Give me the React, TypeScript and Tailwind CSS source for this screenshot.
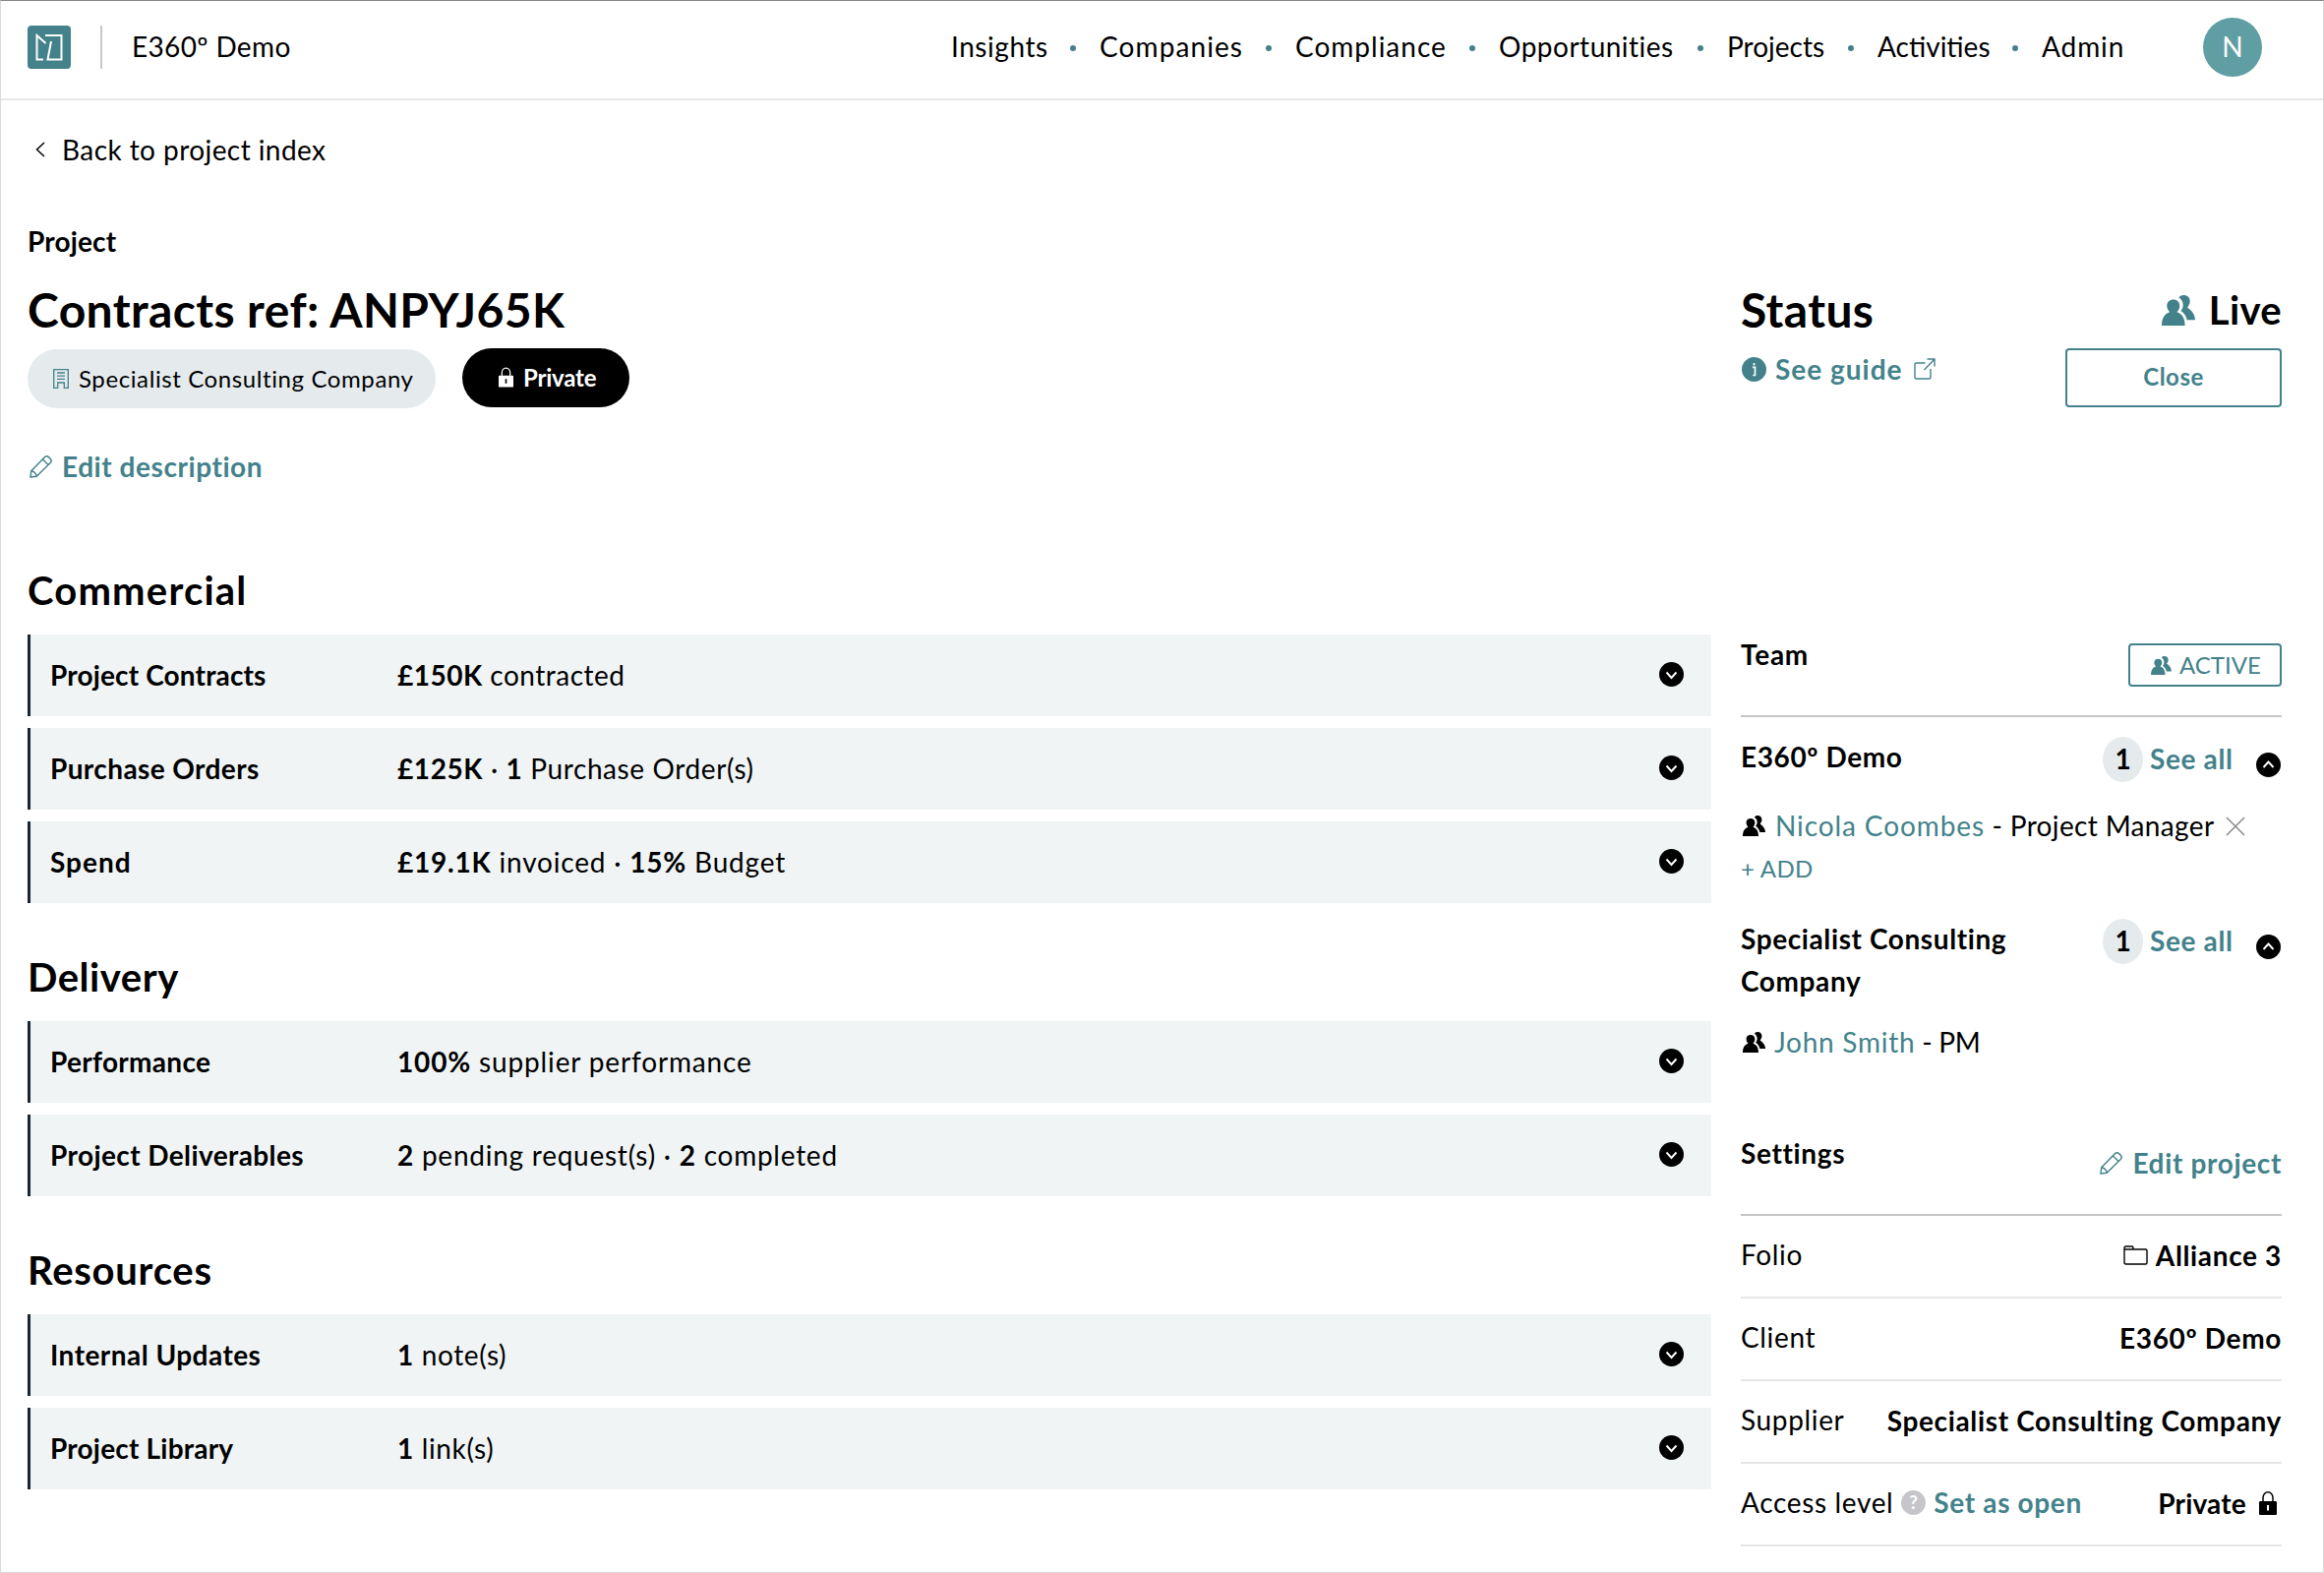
import type { ReactNode } from 'react';

const NAV = [
  { label: 'Insights', cls: 'w-[97px] tracking-[0.55px]' },
  { label: 'Companies', cls: 'w-[145px] tracking-[1.1px]' },
  { label: 'Compliance', cls: 'w-[153px] tracking-[1px]' },
  { label: 'Opportunities', cls: 'w-[178px] tracking-[0.5px]' },
  { label: 'Projects', cls: 'w-[99px]' },
  { label: 'Activities', cls: 'w-[113px]' },
  { label: 'Admin', cls: 'w-[85px] tracking-[0.9px]' },
];

const SECTIONS = [
  {
    title: 'Commercial',
    cls: 'tracking-[1.2px]',
    rows: [
      { label: 'Project Contracts', lcls: 'tracking-[0.15px]', value: <><b>£150K</b> contracted</>, cls: 'tracking-[0.5px]' },
      { label: 'Purchase Orders', lcls: 'tracking-[0.4px]', value: <><b>£125K</b> · <b>1</b> Purchase Order(s)</>, cls: 'tracking-[0.6px]' },
      { label: 'Spend', lcls: 'tracking-[1px]', value: <><b>£19.1K</b> invoiced · <b>15%</b> Budget</>, cls: 'tracking-[0.8px]' },
    ],
  },
  {
    title: 'Delivery',
    cls: 'tracking-[0.55px]',
    rows: [
      { label: 'Performance', lcls: 'tracking-[0.3px]', value: <><b>100%</b> supplier performance</>, cls: 'tracking-[0.85px]' },
      { label: 'Project Deliverables', lcls: 'tracking-[0.4px]', value: <><b>2</b> pending request(s) · <b>2</b> completed</>, cls: 'tracking-[0.75px]' },
    ],
  },
  {
    title: 'Resources',
    cls: 'tracking-[0.75px]',
    rows: [
      { label: 'Internal Updates', lcls: 'tracking-[0.47px]', value: <><b>1</b> note(s)</>, cls: 'tracking-[0.65px]' },
      { label: 'Project Library', lcls: 'tracking-[0.2px]', value: <><b>1</b> link(s)</>, cls: 'tracking-[0.65px]' },
    ],
  },
];

function People({ className }: { className?: string }) {
  return (
    <svg viewBox="0 0 34 31" fill="currentColor" className={className}>
      <path d="M0 31C0 23 3 19 8.200 17.200 6.300 15.700 5.300 13 5.300 10.800 5.300 6.800 8 4.500 11.800 4.500s6.500 2.300 6.500 6.300c0 2.200-1 4.900-2.900 6.400C20.600 19 23.600 23 23.600 31z" />
      <path d="M17.500 2.400C18.600.8 20.300 0 22.300 0c3.800 0 6.400 2.300 6.400 6.200 0 2.200-1.200 4.700-2.700 6.200 4.500 3 8 7.500 8 12.800h-8.300c-.9-3.800-2.800-6.900-6.300-9.200 1.700-1.800 2.300-3.700 2.300-5.900 0-3.200-1.500-6.200-4.200-7.700z" />
    </svg>
  );
}

function Lock({ className }: { className?: string }) {
  return (
    <svg viewBox="0 0 18 24" className={className}>
      <path d="M4 11V6.300a5 5.500 0 0 1 10 0V11" fill="none" stroke="currentColor" strokeWidth="1.500" />
      <path fillRule="evenodd" fill="currentColor" d="M1 10h16a1 1 0 0 1 1 1v12a1 1 0 0 1-1 1H1a1 1 0 0 1-1-1V11a1 1 0 0 1 1-1zM8 14v5.500h2V14z" />
    </svg>
  );
}

function Pencil({ className }: { className?: string }) {
  return (
    <svg viewBox="0 0 24 24" fill="none" stroke="currentColor" strokeWidth="1.500" strokeLinejoin="round" className={className}>
      <path d="M1 23l.8-6.500L15.800 2.200c1.500-1.500 3.300-1.500 4.500-.5l2 2c1 1.200 1 3-.5 4.500L7.500 22.200zM1.800 16.500c2.700 0 5.700 3 5.700 5.700M14 4.200l5.800 5.800" />
    </svg>
  );
}

function Chevron({ up }: { up?: boolean }) {
  return (
    <svg viewBox="0 0 25 25" className="size-[25px] shrink-0">
      <circle cx="12.500" cy="12.500" r="12.500" />
      <path d={up ? 'M7.500 15l5-5.500 5 5.500' : 'M7.500 10.500l5 5.500 5-5.500'} fill="none" stroke="#fff" strokeWidth="1.900" />
    </svg>
  );
}

function TeamHead({ name }: { name: string }) {
  return (
    <div className="flex items-start justify-between">
      <div className="w-[300px] font-bold leading-[43px] tracking-[0.6px]">{name}</div>
      <div className="flex items-start pr-[1px]">
        <span className="mt-[1px] flex h-[46px] w-[41px] items-center justify-center rounded-[50%] bg-[#e5ebed] pb-[2px] font-bold">1</span>
        <span className="ml-[7px] mt-[2px] w-[86px] whitespace-nowrap font-bold leading-[43px] tracking-[0.65px] text-[#43828b]">See all</span>
        <span className="ml-[22px] mt-[17px]"><Chevron up /></span>
      </div>
    </div>
  );
}

function Setting({ label, children }: { label: ReactNode; children: ReactNode }) {
  return (
    <div className="flex h-[84px] items-center justify-between border-b-2 border-[#e6e6e6] pb-[4px] tracking-[0.65px]">
      <div className="flex items-center">{label}</div>
      <div className="flex items-center pt-[2px] font-bold">{children}</div>
    </div>
  );
}

export default function App() {
  return (
    <div className="h-[1599px] w-[2363px] overflow-hidden whitespace-nowrap border border-[#d9d9d9] border-t-[#858585] bg-white font-['Lato',sans-serif] text-[28px] text-black">
      <header className="flex h-[101px] items-start justify-between border-b-2 border-[#e8e8e8] pl-[27px] pr-[62px]">
        <div className="flex pt-[25px]">
          <svg viewBox="0 0 44 44" className="size-11">
            <rect width="44" height="44" rx="4" fill="#43828b" />
            <path d="M18.500 18L9.500 10v24.500H16M18 10h16.500v24.500H20.500L24 16" fill="none" stroke="#fff" strokeWidth="2" />
          </svg>
          <div className="ml-[30px] h-11 w-[2px] bg-[#c8c8c8]" />
          <div className="ml-[30px] leading-[42px] tracking-[0.35px]">E360º Demo</div>
        </div>
        <div className="flex">
          <nav className="flex pt-[25px] leading-[42px]">
            {NAV.map((n, i) => (
              <div key={n.label} className="flex">
                {i > 0 && <span className="mr-6 ml-6 mt-5 size-[6px] rounded-full bg-[#43828b]" />}
                <span className={n.cls}>{n.label}</span>
              </div>
            ))}
          </nav>
          <div className="ml-[79px] mt-[17px] flex size-[60px] items-center justify-center rounded-full bg-[#5f9ea3] pb-[2px] text-white">N</div>
        </div>
      </header>

      <div className="pl-[27px] pr-[42px]">
        <div className="mt-[29px] flex items-center leading-[42px] tracking-[0.43px]">
          <svg viewBox="0 0 10 16" className="ml-2 mr-[17px] h-4 w-[10px]" fill="none" stroke="#000" strokeWidth="1.500"><path d="M9 1L1.500 8 9 15" /></svg>
          Back to project index
        </div>
        <div className="mt-[51px] font-bold leading-[42px] tracking-[0.15px]">Project</div>

        <div className="mt-[17px] flex justify-between">
          <div>
            <h1 className="text-[48px] font-bold leading-[64px] tracking-[0.4px]">Contracts ref: ANPYJ65K</h1>
            <div className="mt-[7px] flex items-start text-[24px]">
              <div className="mt-[1px] flex h-[60px] w-[415px] items-center rounded-full bg-[#e5ebed] pb-[1px] pl-[26px] tracking-[0.6px]">
                <svg viewBox="0 0 16 20" className="mr-[10px] h-5 w-4" fill="none" stroke="#43828b" strokeWidth="1.300">
                  <path d="M.7.7h14.600v18.600h-4V14H4.700v5.300h-4zM4 4h8M4 7.200h8M4 10.400h8" />
                </svg>
                Specialist Consulting Company
              </div>
              <div className="ml-[27px] flex h-[60px] w-[170px] items-center rounded-full bg-black pb-[1px] pl-[37px] font-bold tracking-[-0.2px] text-white">
                <Lock className="mr-[10px] h-[21px] w-[15px]" />
                Private
              </div>
            </div>
            <div className="mt-[38px] flex items-center font-bold leading-[42px] tracking-[0.56px] text-[#43828b]">
              <Pencil className="ml-[2px] mr-[10px] size-[23px]" />
              Edit description
            </div>
          </div>
          <div className="w-[550px]">
            <div className="flex items-center justify-between font-bold leading-[64px] tracking-[0.35px]">
              <h2 className="text-[48px]">Status</h2>
              <div className="flex items-center text-[40px]">
                <People className="mr-[14px] h-[31px] w-[34px] text-[#43828b]" />
                Live
              </div>
            </div>
            <div className="mt-[7px] flex items-start justify-between font-bold text-[#43828b]">
              <div className="flex items-center leading-[42px] tracking-[1px]">
                <svg viewBox="0 0 25 25" className="ml-[1px] mr-[9px] size-[25px]">
                  <circle cx="12.500" cy="12.500" r="12.500" fill="#43828b" />
                  <path d="M11 10.400h2.500V19M12.500 6v2.500M11.300 18.500h3" stroke="#fff" strokeWidth="1.700" fill="none" />
                </svg>
                See guide
                <svg viewBox="0 0 22 22" className="ml-[11px] size-[22px]" fill="none" stroke="currentColor" strokeWidth="1.400">
                  <path d="M11.500 5H2.500C1.500 5 1 5.500 1 6.500v13c0 1 .5 1.500 1.500 1.500h13c1 0 1.500-.5 1.500-1.500v-8.500M13.500 1H21v7.500M21 1L10.500 12" />
                </svg>
              </div>
              <button className="h-[60px] w-[220px] rounded-[4px] border-2 border-[#43828b] pb-[2px] text-[24px] font-bold tracking-[0.5px]">Close</button>
            </div>
          </div>
        </div>

        <div className="mt-[30px] flex justify-between">
          <div className="mt-[45px] w-[1712px]">
            {SECTIONS.map(s => (
              <section key={s.title} className="mb-[45px]">
                <h2 className={`mb-[15px] text-[40px] font-bold leading-[60px] ${s.cls}`}>{s.title}</h2>
                <div className="space-y-3">
                  {s.rows.map(r => (
                    <div key={r.label} className="flex h-[83px] items-center border-l-[3px] border-[#1b2730] bg-[#f0f4f5] pb-[2px] pl-5 pr-7">
                      <div className={`w-[353px] font-bold ${r.lcls}`}>{r.label}</div>
                      <div className={`flex-1 ${r.cls}`}>{r.value}</div>
                      <Chevron />
                    </div>
                  ))}
                </div>
              </section>
            ))}
          </div>

          <aside className="mt-[120px] w-[550px]">
            <div className="flex h-[84px] items-start justify-between border-b-2 border-[#c4c4c4]">
              <div className="font-bold leading-[41px] tracking-[0.75px]">Team</div>
              <div className="mt-[9px] flex h-11 w-[156px] items-center rounded-[4px] border-2 border-[#43828b] pl-[21px] text-[24px] text-[#43828b]">
                <People className="mr-2 h-[19px] w-[21px]" />
                ACTIVE
              </div>
            </div>
            <div className="mt-[19px] whitespace-normal"><TeamHead name="E360º Demo" /></div>
            <div className="mt-[23px] flex items-center whitespace-pre leading-[43px]">
              <People className="ml-[1px] mr-[9px] h-[21px] w-[25px]" />
              <span className="tracking-[0.9px] text-[#43828b]">Nicola Coombes</span>
              <span className="tracking-[0.35px]"> - Project Manager</span>
              <svg viewBox="0 0 20 20" className="ml-3 size-5" fill="none" stroke="#888" strokeWidth="1.500"><path d="M1 1l18 18M19 1L1 19" /></svg>
            </div>
            <div className="text-[24px] leading-[43px] tracking-[0.3px] text-[#43828b]">+ ADD</div>
            <div className="mt-[29px] whitespace-normal"><TeamHead name="Specialist Consulting Company" /></div>
            <div className="mt-[19px] flex items-center whitespace-pre leading-[43px]">
              <People className="ml-[1px] mr-[8px] h-[21px] w-[25px]" />
              <span className="tracking-[0.75px] text-[#43828b]">John Smith</span>
              <span className="tracking-[-0.3px]"> - PM</span>
            </div>
            <div className="mt-[71px] flex h-[84px] items-start justify-between border-b-2 border-[#c4c4c4] font-bold leading-[41px] tracking-[0.65px]">
              <div>Settings</div>
              <div className="mt-[10px] flex items-center text-[#43828b]"><Pencil className="mr-[10px] size-[23px]" />Edit project</div>
            </div>
            <Setting label="Folio">
              <svg viewBox="0 0 25 20" className="mr-2 h-5 w-[25px]" fill="none" stroke="#000" strokeWidth="1.400"><path d="M1 17.500V2.500C1 1.500 1.500 1 2.500 1h6c1 0 1.500.5 1.500 1.500V4h12.500c1 0 1.500.5 1.500 1.500v12c0 1-.5 1.500-1.500 1.500h-20C1.500 19 1 18.500 1 17.500zM1 4h9" /></svg>
              Alliance 3
            </Setting>
            <Setting label="Client">E360º Demo</Setting>
            <Setting label="Supplier">Specialist Consulting Company</Setting>
            <Setting label={<>
              Access level
              <span className="ml-2 mr-[8px] flex size-[25px] items-center justify-center rounded-full bg-[#c6c6ca] text-[18px] font-bold text-white">?</span>
              <span className="font-bold text-[#43828b]">Set as open</span>
            </>}>
              <span className="tracking-[0.2px]">Private</span>
              <Lock className="ml-[13px] mr-[5px] h-6 w-[18px]" />
            </Setting>
          </aside>
        </div>
      </div>
    </div>
  );
}
